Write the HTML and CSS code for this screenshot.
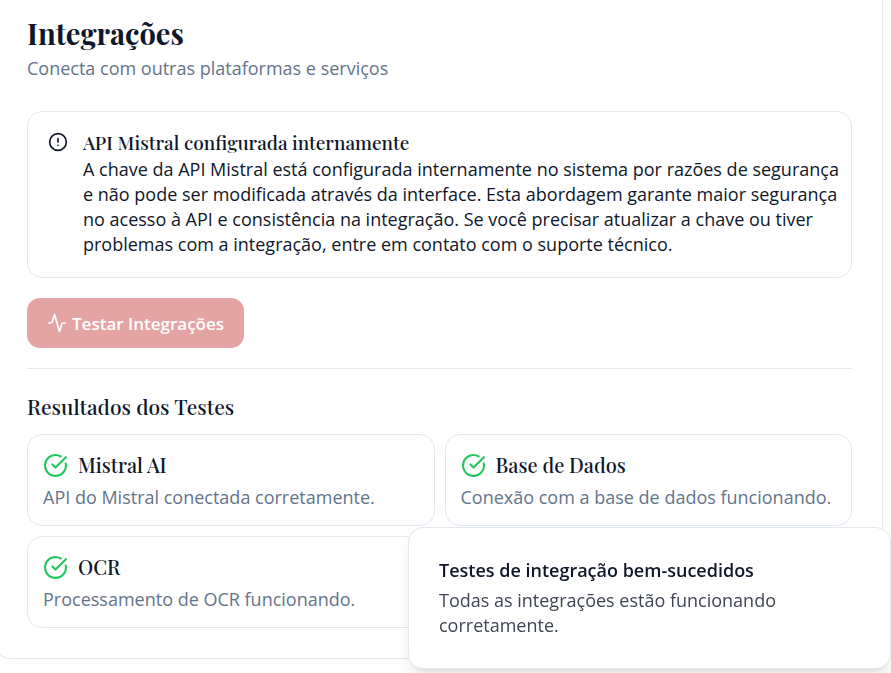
FILE: index.html
```html
<!DOCTYPE html>
<html lang="pt">
<head>
  <meta charset="utf-8">
  <meta name="viewport" content="width=device-width, initial-scale=1">
  <title>Integrações</title>
  <link rel="stylesheet" href="styles.css">
</head>
<body>
  <svg class="sprite" aria-hidden="true">
    <symbol id="circle-check" viewBox="0 0 24 24">
      <path d="M21.801 10A10 10 0 1 1 17 3.335"/>
      <path d="m9 11 3 3L22 4"/>
    </symbol>
  </svg>
  <main class="panel">
    <header class="panel-header">
      <h1 class="panel-title">Integrações</h1>
      <p class="muted">Conecta com outras plataformas e serviços</p>
    </header>
    <section class="alert">
      <svg class="icon icon-alert" viewBox="0 0 24 24" aria-hidden="true">
        <circle cx="12" cy="12" r="10"/>
        <path d="M12 8v4M12 16h.01"/>
      </svg>
      <div class="alert-body">
        <h2 class="alert-title">API Mistral configurada internamente</h2>
        <p>A chave da API Mistral está configurada internamente no sistema por razões de segurança e não pode ser modificada através da interface. Esta abordagem garante maior segurança no acesso à API e consistência na integração. Se você precisar atualizar a chave ou tiver problemas com a integração, entre em contato com o suporte técnico.</p>
      </div>
    </section>
    <button class="test-button" type="button" disabled>
      <svg class="icon icon-activity" viewBox="0 0 24 24" aria-hidden="true">
        <path d="M22 12h-2.48a2 2 0 0 0-1.93 1.46l-2.35 8.36a.25.25 0 0 1-.48 0L9.24 2.18a.25.25 0 0 0-.48 0l-2.35 8.36A2 2 0 0 1 4.49 12H2"/>
      </svg>
      Testar Integrações
    </button>
    <hr class="separator">
    <section class="results">
      <h2 class="results-title">Resultados dos Testes</h2>
      <div class="results-grid">
        <article class="result">
          <h3 class="result-title"><svg class="icon icon-check" aria-hidden="true"><use href="#circle-check"/></svg>Mistral AI</h3>
          <p class="muted">API do Mistral conectada corretamente.</p>
        </article>
        <article class="result">
          <h3 class="result-title"><svg class="icon icon-check" aria-hidden="true"><use href="#circle-check"/></svg>Base de Dados</h3>
          <p class="muted">Conexão com a base de dados funcionando.</p>
        </article>
        <article class="result">
          <h3 class="result-title"><svg class="icon icon-check" aria-hidden="true"><use href="#circle-check"/></svg>OCR</h3>
          <p class="muted">Processamento de OCR funcionando.</p>
        </article>
      </div>
    </section>
  </main>
  <div class="toast" role="status">
    <strong class="toast-title">Testes de integração bem-sucedidos</strong>
    <p class="toast-text">Todas as integrações estão funcionando corretamente.</p>
  </div>
</body>
</html>
```
FILE: styles.css
```css
:root {
  --ink: #0f172a;
  --muted: #64748b;
  --line: #e2e8f0;
  --serif: "Playfair Display", "Liberation Serif", serif;
}

* {
  box-sizing: border-box;
}

body {
  margin: 0;
  background: #fff;
  color: var(--ink);
  font: 18px/25px "Open Sans", sans-serif;
  overflow-x: hidden;
}

h1, h2, h3, p {
  margin: 0;
}

.sprite {
  display: none;
}

.icon {
  flex: none;
  fill: none;
  stroke: currentColor;
  stroke-width: 2;
  stroke-linecap: round;
  stroke-linejoin: round;
}

.panel {
  margin: 0 8px 0 -4px;
  padding: 16px 30px 30px;
  border: 1px solid var(--line);
  border-top: 0;
  border-radius: 0 0 15px 15px;
  box-shadow: 0 1px 3px rgb(0 0 0 / 6%);
}

.muted {
  color: var(--muted);
}

.panel-title {
  margin-bottom: 5px;
  font: 700 29px/35px var(--serif);
}

.panel-header {
  margin-bottom: 30px;
}

.alert {
  display: flex;
  gap: 15px;
  padding: 20px 10px 20px 20px;
  border: 1px solid var(--line);
  border-radius: 15px;
}

.icon-alert {
  width: 20px;
  height: 20px;
}

.alert-title {
  margin-bottom: 5px;
  font: 500 19px/20px var(--serif);
}

.test-button {
  display: flex;
  align-items: center;
  gap: 5px;
  height: 50px;
  margin: 20px 0;
  padding: 0 20px;
  border: 0;
  border-radius: 13px;
  background: #e4a4a4;
  color: #fff;
  font: 600 17px/25px "Open Sans", sans-serif;
}

.icon-activity {
  width: 20px;
  height: 20px;
}

.separator {
  height: 1px;
  margin: 0 0 20px;
  border: 0;
  background: var(--line);
}

.results-title {
  margin-bottom: 10px;
  font: 500 21px/35px var(--serif);
}

.results-grid {
  display: grid;
  grid-template-columns: 1fr 1fr;
  gap: 10px;
}

.result {
  padding: 15px;
  border: 1px solid var(--line);
  border-radius: 15px;
}

.result-title {
  display: flex;
  align-items: center;
  gap: 10px;
  margin-bottom: 5px;
  font: 500 20px/30px var(--serif);
}

.icon-check {
  width: 25px;
  height: 25px;
  color: #22c55e;
}

.toast {
  position: fixed;
  right: 0;
  bottom: 4px;
  width: 483px;
  max-width: 100%;
  padding: 30px;
  border: 1px solid var(--line);
  border-radius: 15px;
  background: #fff;
  box-shadow: 0 10px 15px -3px rgb(0 0 0 / 10%), 0 4px 6px -4px rgb(0 0 0 / 10%);
}

.toast-title {
  display: block;
  margin-bottom: 5px;
  font-weight: 600;
}

.toast-text {
  color: #3f4555;
}
```
